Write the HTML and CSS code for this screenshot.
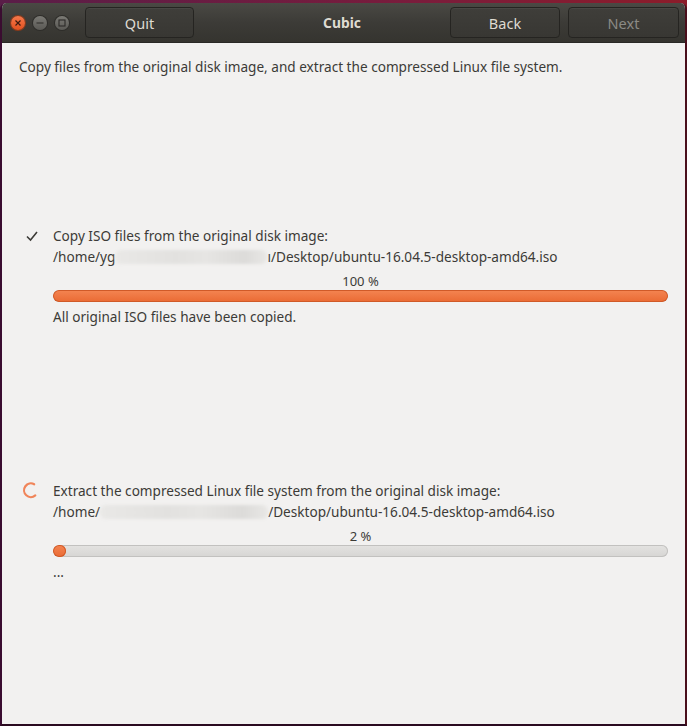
FILE: index.html
```html
<!DOCTYPE html>
<html>
<head>
<meta charset="utf-8">
<title>Cubic</title>
<link rel="stylesheet" href="styles.css">
</head>
<body>
<div class="window">
  <header class="titlebar">
    <div class="controls">
      <span class="wbtn close"><svg width="14" height="14" viewBox="0 0 14 14"><path d="M4.5 4.5 L9.5 9.5 M9.5 4.5 L4.5 9.5" stroke="#3a1a10" stroke-width="1.2" fill="none"/></svg></span>
      <span class="wbtn"><svg width="14" height="14" viewBox="0 0 14 14"><path d="M3.5 7 H10.5" stroke="#2c2b28" stroke-width="1.2" fill="none"/></svg></span>
      <span class="wbtn"><svg width="14" height="14" viewBox="0 0 14 14"><rect x="4" y="4" width="6" height="6" stroke="#2c2b28" stroke-width="1.1" fill="none"/></svg></span>
    </div>
    <button class="hbtn quit">Quit</button>
    <div class="title">Cubic</div>
    <button class="hbtn back">Back</button>
    <button class="hbtn next">Next</button>
  </header>
  <main class="content">
    <p class="intro">Copy files from the original disk image, and extract the compressed Linux file system.</p>

    <section class="task task1">
      <div class="icon">
        <svg width="14" height="14" viewBox="0 0 14 14"><path d="M2 7.5 L5.5 11 L12 3" stroke="#3c3b37" stroke-width="1.6" fill="none"/></svg>
      </div>
      <div class="body">
        <div class="line">Copy ISO files from the original disk image:</div>
        <div class="line path">/home/y<span class="ghost">g</span><span class="blur b1"></span><span class="ghost">ı</span>/Desktop/ubuntu-16.04.5-desktop-amd64.iso</div>
        <div class="pct">100 %</div>
        <div class="bar"><div class="fill" style="width:100%"></div></div>
        <div class="line">All original ISO files have been copied.</div>
      </div>
    </section>

    <section class="task task2">
      <div class="icon">
        <svg width="20" height="20" viewBox="0 0 20 20"><path d="M14.2 4.3 A6.8 6.8 0 1 0 15.3 15.4" stroke="#f0855a" stroke-width="2.2" fill="none" stroke-linecap="round"/></svg>
      </div>
      <div class="body">
        <div class="line">Extract the compressed Linux file system from the original disk image:</div>
        <div class="line path">/home/<span class="blur b2"></span>/Desktop/ubuntu-16.04.5-desktop-amd64.iso</div>
        <div class="pct">2 %</div>
        <div class="bar trough"><div class="fill small" style="width:2%"></div></div>
        <div class="line">...</div>
      </div>
    </section>
  </main>
</div>
</body>
</html>
```
FILE: styles.css
```css
html, body {
  margin: 0;
  padding: 0;
  width: 687px;
  height: 726px;
  overflow: hidden;
}
body {
  background: linear-gradient(90deg, #5a1d48 0%, #7a1c3c 60%, #8c1c2a 100%);
  font-family: "Noto Sans", "DejaVu Sans", sans-serif;
}
.window {
  margin-top: 3px;
  height: 721px;
  display: flex;
  flex-direction: column;
  border-left: 2px solid #3a0c30;
  border-right: 2px solid #4a0f1c;
  border-bottom: 2px solid #2a0a20;
  border-radius: 6px 6px 0 0;
  overflow: hidden;
  background: #f2f1f0;
}
.titlebar {
  height: 39px;
  flex: none;
  display: flex;
  align-items: center;
  background: linear-gradient(#4a4944, #3c3b37 50%, #35342f);
  border-bottom: 1px solid #2a2926;
  padding: 0 6px 0 9px;
  position: relative;
}
.controls {
  display: flex;
  gap: 8px;
  margin-right: 16px;
}
.wbtn {
  width: 14px;
  height: 14px;
  border-radius: 50%;
  background: linear-gradient(#7a7974, #5a5955);
  box-shadow: 0 0 0 1px #2e2d2a;
  display: flex;
}
.wbtn.close {
  background: linear-gradient(#f6784a, #e1501f);
  box-shadow: 0 0 0 1px #8c3a1a;
}
.hbtn {
  height: 31px;
  border: 1px solid #252421;
  border-radius: 4px;
  background: linear-gradient(#3f3e3a, #383733);
  box-shadow: inset 0 1px 0 rgba(255,255,255,0.05);
  color: #dfdbd2;
  font-family: "Noto Sans", "DejaVu Sans", sans-serif;
  font-size: 14.5px;
  padding: 0;
  display: flex;
  align-items: center;
  justify-content: center;
}
.quit { width: 109px; }
.title {
  flex: 1;
  text-align: center;
  color: #dfdbd2;
  font-weight: bold;
  font-size: 13.8px;
  padding-left: 40px;
  margin-top: -1px;
}
.back { width: 110px; margin-right: 8px; }
.next { width: 111px; color: #8b8a85; }
.content {
  flex: 1;
  padding: 0 17px 0 15px;
  color: #3c3b37;
  font-size: 13.6px;
}
.intro {
  margin: 14px 0 0 2px;
  line-height: 20px;
}
.task {
  display: flex;
}
.task1 { margin-top: 148px; }
.task2 { margin-top: 153px; }
.icon {
  flex: none;
  display: flex;
  justify-content: flex-start;
}
.task1 .icon { padding: 4px 0 0 8px; width: 28px; }
.task2 .icon { padding: 0 0 0 3px; width: 33px; }
.body {
  flex: 1;
}
.line {
  line-height: 21px;
  white-space: nowrap;
}
.ghost { color: #3c3b37; }
.blur {
  display: inline-block;
  height: 14px;
  vertical-align: -2px;
  background: linear-gradient(90deg, #e9e8e6, #e2e1df 40%, #e6e5e3 60%, #dcdbd9 85%, #e8e7e5);
  filter: blur(1.5px);
  border-radius: 6px;
}
.b1 { width: 152px; }
.b2 { width: 168px; }
.pct {
  text-align: center;
  line-height: 14px;
  margin-top: 7px;
  font-size: 13px;
}
.bar {
  height: 12px;
  margin: 2px 0 4px 0;
  border-radius: 6px;
  background: #d9d8d6;
  box-shadow: inset 0 0 0 1px #c2c1bf;
  overflow: hidden;
  display: flex;
}
.fill {
  height: 100%;
  border-radius: 6px;
  background: linear-gradient(#f48552, #ea6a33);
  box-shadow: inset 0 0 0 1px #d05a28;
}
.fill.small { min-width: 13px; }
.trough {
  background: linear-gradient(#e4e3e1, #d6d5d3);
}
```
